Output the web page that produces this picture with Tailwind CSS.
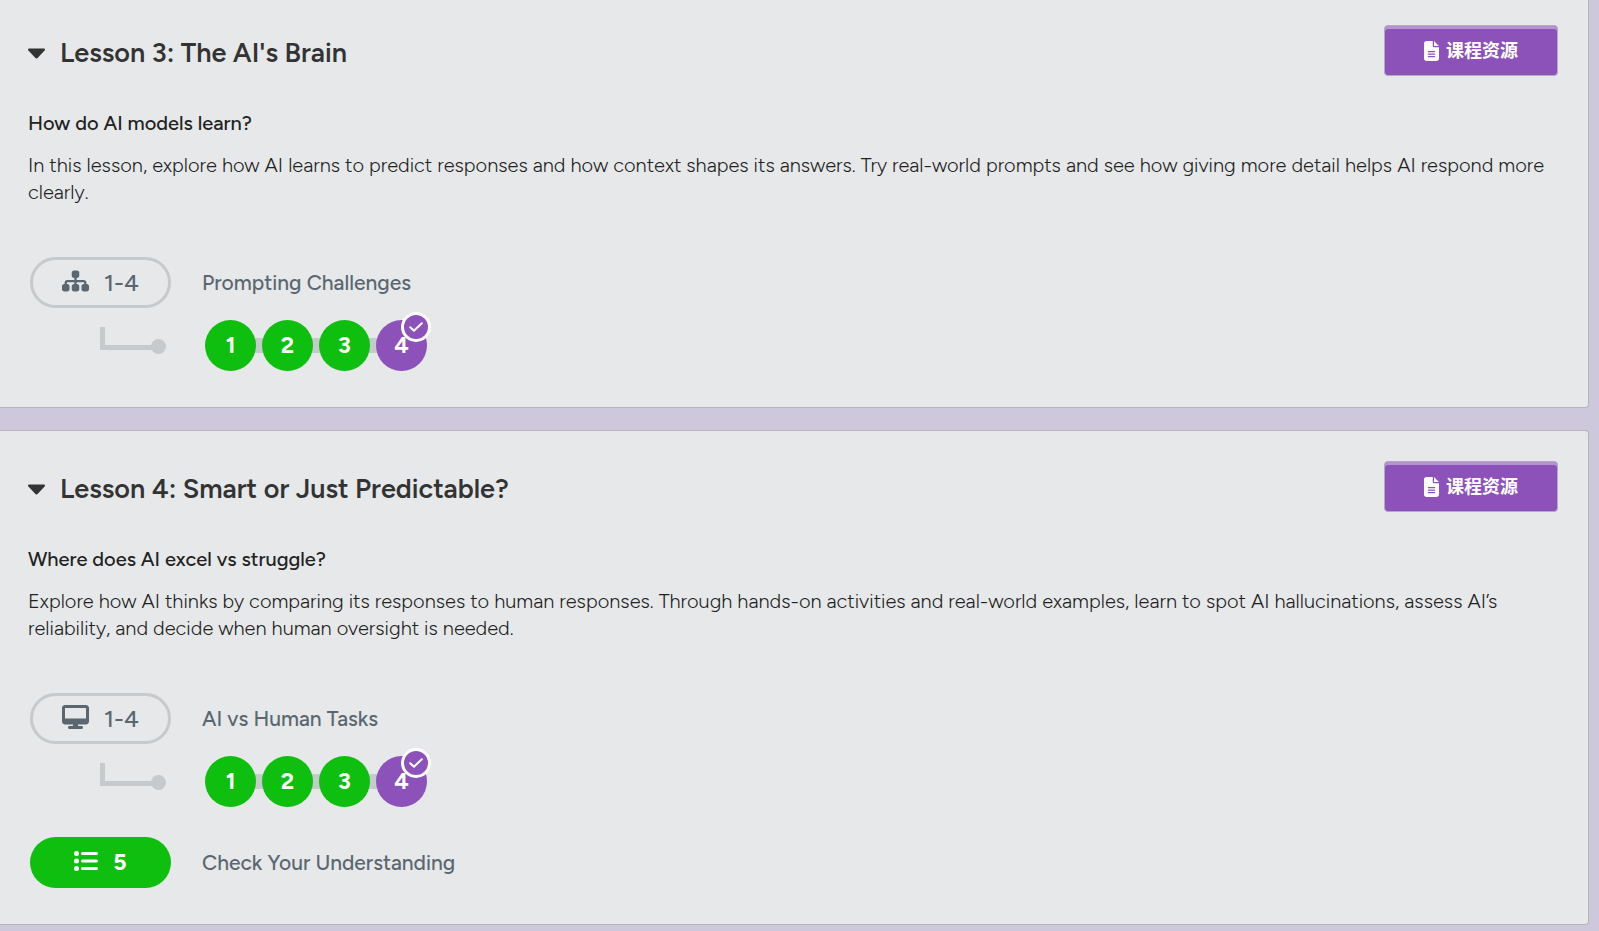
<!DOCTYPE html>
<html lang="zh-CN">
<head>
  <meta charset="UTF-8">
  <meta name="viewport" content="width=device-width, initial-scale=1.0">
  <title>Lessons</title>
  <script src="https://cdn.jsdelivr.net/npm/@tailwindcss/browser@4"></script>
</head>
<body class="bg-[#cec8dc] font-[Figtree,Inter,'Noto_Sans_CJK_SC',sans-serif] text-[#333]">
  <!-- shared icons -->
  <svg class="hidden">
    <symbol id="caret" viewBox="0 0 17 11"><path d="M1.2 0.5H15.8C16.9 0.5 17.3 1.6 16.6 2.4L9.8 9.8C9 10.6 8 10.6 7.2 9.8L0.4 2.4C-0.3 1.6 0.1 0.5 1.2 0.5z"/></symbol>
    <symbol id="file" viewBox="0 0 384 512"><path fill-rule="evenodd" d="M64 0C28.700 0 0 28.700 0 64V448c0 35.300 28.700 64 64 64H320c35.300 0 64-28.700 64-64V160H256c-17.700 0-32-14.300-32-32V0H64zM256 0V128H384L256 0zM112 256H272c8.800 0 16 7.200 16 16s-7.200 16-16 16H112c-8.800 0-16-7.200-16-16s7.200-16 16-16zm0 64H272c8.800 0 16 7.200 16 16s-7.200 16-16 16H112c-8.800 0-16-7.200-16-16s7.200-16 16-16zm0 64H272c8.800 0 16 7.200 16 16s-7.200 16-16 16H112c-8.800 0-16-7.200-16-16s7.200-16 16-16z"/></symbol>
    <symbol id="sitemap" viewBox="0 0 576 512"><path d="M208 80c0-26.500 21.500-48 48-48h64c26.500 0 48 21.500 48 48v64c0 26.500-21.500 48-48 48h-8v40H464c30.900 0 56 25.100 56 56v32h8c26.500 0 48 21.500 48 48v64c0 26.500-21.500 48-48 48H464c-26.500 0-48-21.500-48-48V368c0-26.500 21.500-48 48-48h8V288c0-4.400-3.600-8-8-8H312v40h8c26.500 0 48 21.500 48 48v64c0 26.500-21.500 48-48 48H256c-26.500 0-48-21.500-48-48V368c0-26.500 21.500-48 48-48h8V280H112c-4.400 0-8 3.600-8 8v32h8c26.500 0 48 21.500 48 48v64c0 26.500-21.500 48-48 48H48c-26.500 0-48-21.500-48-48V368c0-26.500 21.500-48 48-48h8V288c0-30.900 25.100-56 56-56H264V192h-8c-26.500 0-48-21.500-48-48V80z"/></symbol>
    <symbol id="desktop" viewBox="0 0 576 512"><path d="M64 0C28.700 0 0 28.700 0 64V352c0 35.300 28.700 64 64 64H240l-10.700 32H160c-17.700 0-32 14.300-32 32s14.300 32 32 32H416c17.700 0 32-14.300 32-32s-14.300-32-32-32H346.700L336 416H512c35.300 0 64-28.700 64-64V64c0-35.300-28.700-64-64-64H64zM512 64V288H64V64H512z"/></symbol>
    <symbol id="list" viewBox="0 0 24 24"><circle cx="2.500" cy="4.500" r="2.500"/><circle cx="2.500" cy="12" r="2.500"/><circle cx="2.500" cy="19.500" r="2.500"/><rect x="7" y="3" width="17" height="3" rx="1.500"/><rect x="7" y="10.500" width="17" height="3" rx="1.500"/><rect x="7" y="18" width="17" height="3" rx="1.500"/></symbol>
    <symbol id="check" viewBox="0 0 14 10"><path d="M1.200 5.200L5 8.800L12.800 1.200" fill="none" stroke="currentColor" stroke-width="2" stroke-linecap="round" stroke-linejoin="round"/></symbol>
  </svg>

  <main class="mr-[10px] flex flex-col gap-[22px]">

    <section class="rounded-br-sm border-r border-b border-[#b5b5ba] bg-[#e6e8e9] px-7 pt-[25px] pb-9">
      <header class="flex items-center justify-between pr-0.5">
        <h2 class="pt-1 text-[27px] leading-8 font-semibold">
          <button type="button" aria-expanded="true" class="flex items-center gap-[15px]">
            <svg class="mt-0.5 h-[11px] w-[17px] fill-current"><use href="#caret"/></svg>
            Lesson 3: The AI's Brain
          </button>
        </h2>
        <button type="button" class="flex h-[51px] w-[174px] items-center justify-center gap-[7px] rounded border border-[#b5a9c0] bg-[#8c52ba] text-lg font-bold text-white shadow-[inset_0_3px_0_#b592d3]">
          <svg class="h-5 w-[15px] fill-current"><use href="#file"/></svg>
          课程资源
        </button>
      </header>

      <h3 class="mt-[34px] text-[20px] leading-[27px] font-medium text-[#222]">How do AI models learn?</h3>
      <p class="mt-[15px] text-[20px] leading-[27px] font-light text-[#222]">In this lesson, explore how AI learns to predict responses and how context shapes its answers. Try real-world prompts and see how giving more detail helps AI respond more clearly.</p>

      <div class="mt-[51px] grid grid-cols-[141px_1fr] items-center gap-x-[31px] gap-y-3 pl-0.5 text-[#5b6770]">
        <a href="#" class="flex h-[51px] items-center justify-center gap-[15px] rounded-full border-3 border-[#c6cacd] text-2xl font-medium">
          <svg class="mb-1 h-6 w-[27px] fill-current"><use href="#sitemap"/></svg>
          1-4
        </a>
        <span class="text-[21px] font-medium">Prompting Challenges</span>

        <!-- elbow from the pill to the bubbles -->
        <div class="flex items-end pb-[10px] pl-[70px]">
          <div class="mb-1 h-[23px] w-[52px] border-b-5 border-l-5 border-[#c6cacd]"></div>
          <div class="-ml-px size-[15px] rounded-full bg-[#c6cacd]"></div>
        </div>
        <nav class="flex items-center pl-[3px] text-[23px] font-bold text-white">
          <a href="#" class="relative flex size-[51px] items-center justify-center rounded-full bg-[#0fbf0f]">1</a>
          <i class="-mx-1 h-[15px] w-[14px] bg-[#c6cacd]"></i>
          <a href="#" class="relative flex size-[51px] items-center justify-center rounded-full bg-[#0fbf0f]">2</a>
          <i class="-mx-1 h-[15px] w-[14px] bg-[#c6cacd]"></i>
          <a href="#" class="relative flex size-[51px] items-center justify-center rounded-full bg-[#0fbf0f]">3</a>
          <i class="-mx-1 h-[15px] w-[14px] bg-[#c6cacd]"></i>
          <a href="#" class="relative flex size-[51px] items-center justify-center rounded-full bg-[#8c52ba]">
            4
            <span class="absolute -top-2 -right-1 flex size-[30px] items-center justify-center rounded-full border-3 border-white bg-[#8c52ba]">
              <svg class="h-[10px] w-[14px]"><use href="#check"/></svg>
            </span>
          </a>
        </nav>
      </div>
    </section>

    <section class="rounded-r-sm border-y border-r border-[#b5b5ba] bg-[#e6e8e9] px-7 pt-[30px] pb-9">
      <header class="flex items-center justify-between pr-0.5">
        <h2 class="pt-1 text-[27px] leading-8 font-semibold">
          <button type="button" aria-expanded="true" class="flex items-center gap-[15px]">
            <svg class="mt-0.5 h-[11px] w-[17px] fill-current"><use href="#caret"/></svg>
            Lesson 4: Smart or Just Predictable?
          </button>
        </h2>
        <button type="button" class="flex h-[51px] w-[174px] items-center justify-center gap-[7px] rounded border border-[#b5a9c0] bg-[#8c52ba] text-lg font-bold text-white shadow-[inset_0_3px_0_#b592d3]">
          <svg class="h-5 w-[15px] fill-current"><use href="#file"/></svg>
          课程资源
        </button>
      </header>

      <h3 class="mt-[34px] text-[20px] leading-[27px] font-medium text-[#222]">Where does AI excel vs struggle?</h3>
      <p class="mt-[15px] text-[20px] leading-[27px] font-light text-[#222]">Explore how AI thinks by comparing its responses to human responses. Through hands-on activities and real-world examples, learn to spot AI hallucinations, assess AI’s reliability, and decide when human oversight is needed.</p>

      <div class="mt-[51px] grid grid-cols-[141px_1fr] items-center gap-x-[31px] gap-y-3 pl-0.5 text-[#5b6770]">
        <a href="#" class="flex h-[51px] items-center justify-center gap-[15px] rounded-full border-3 border-[#c6cacd] text-2xl font-medium">
          <svg class="mb-1 h-6 w-[27px] fill-current"><use href="#desktop"/></svg>
          1-4
        </a>
        <span class="text-[21px] font-medium">AI vs Human Tasks</span>

        <div class="flex items-end pb-[10px] pl-[70px]">
          <div class="mb-1 h-[23px] w-[52px] border-b-5 border-l-5 border-[#c6cacd]"></div>
          <div class="-ml-px size-[15px] rounded-full bg-[#c6cacd]"></div>
        </div>
        <nav class="flex items-center pl-[3px] text-[23px] font-bold text-white">
          <a href="#" class="relative flex size-[51px] items-center justify-center rounded-full bg-[#0fbf0f]">1</a>
          <i class="-mx-1 h-[15px] w-[14px] bg-[#c6cacd]"></i>
          <a href="#" class="relative flex size-[51px] items-center justify-center rounded-full bg-[#0fbf0f]">2</a>
          <i class="-mx-1 h-[15px] w-[14px] bg-[#c6cacd]"></i>
          <a href="#" class="relative flex size-[51px] items-center justify-center rounded-full bg-[#0fbf0f]">3</a>
          <i class="-mx-1 h-[15px] w-[14px] bg-[#c6cacd]"></i>
          <a href="#" class="relative flex size-[51px] items-center justify-center rounded-full bg-[#8c52ba]">
            4
            <span class="absolute -top-2 -right-1 flex size-[30px] items-center justify-center rounded-full border-3 border-white bg-[#8c52ba]">
              <svg class="h-[10px] w-[14px]"><use href="#check"/></svg>
            </span>
          </a>
        </nav>

        <a href="#" class="mt-[18px] flex h-[51px] items-center justify-center gap-[15px] rounded-full bg-[#0fbf0f] text-[23px] font-bold text-white">
          <svg class="mb-1 size-6 fill-current"><use href="#list"/></svg>
          5
        </a>
        <span class="mt-[18px] text-[21px] font-medium">Check Your Understanding</span>
      </div>
    </section>

  </main>
</body>
</html>
